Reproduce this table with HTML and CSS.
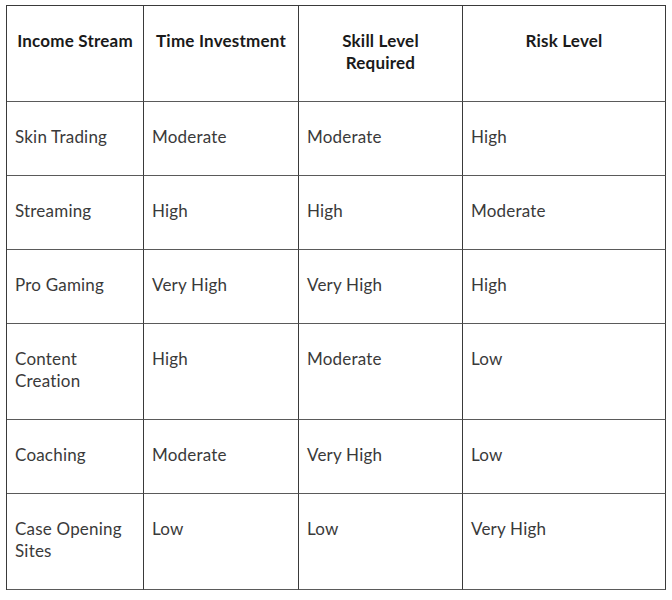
FILE: index.html
```html
<!DOCTYPE html>
<html>
<head>
<meta charset="utf-8">
<link rel="stylesheet" href="styles.css">
</head>
<body>
<table class="grid">
  <colgroup>
    <col class="c1"><col class="c2"><col class="c3"><col class="c4">
  </colgroup>
  <thead>
    <tr class="head">
      <th>Income Stream</th>
      <th>Time Investment</th>
      <th>Skill Level<br>Required</th>
      <th>Risk Level</th>
    </tr>
  </thead>
  <tbody>
    <tr><td>Skin Trading</td><td>Moderate</td><td>Moderate</td><td>High</td></tr>
    <tr><td>Streaming</td><td>High</td><td>High</td><td>Moderate</td></tr>
    <tr><td>Pro Gaming</td><td>Very High</td><td>Very High</td><td>High</td></tr>
    <tr><td>Content<br>Creation</td><td>High</td><td>Moderate</td><td>Low</td></tr>
    <tr><td>Coaching</td><td>Moderate</td><td>Very High</td><td>Low</td></tr>
    <tr><td>Case Opening<br>Sites</td><td>Low</td><td>Low</td><td>Very High</td></tr>
  </tbody>
</table>
</body>
</html>
```
FILE: styles.css
```css
html, body {
  margin: 0;
  padding: 0;
  background: #ffffff;
}
body {
  padding: 5px 0 0 6px;
  font-family: "Lato", "Open Sans", sans-serif;
  font-size: 17px;
  letter-spacing: 0.2px;
  color: #3a3a3a;
}
.grid {
  border-collapse: separate;
  border-spacing: 0;
  table-layout: fixed;
  width: 660px;
  border-top: 1px solid #3a3a3a;
  border-left: 1px solid #3a3a3a;
}
.c1 { width: 137px; }
.c2 { width: 155px; }
.c3 { width: 164px; }
.c4 { width: 203px; }
.grid th,
.grid td {
  box-sizing: border-box;
  border-right: 1px solid #3a3a3a;
  border-bottom: 1px solid #5a5a5a;
  padding: 24px 8px 27px 8px;
  line-height: 22px;
  vertical-align: top;
  text-align: left;
  font-weight: 400;
}
.grid th {
  font-weight: 700;
  text-align: center;
  color: #1a1a1a;
}
```
